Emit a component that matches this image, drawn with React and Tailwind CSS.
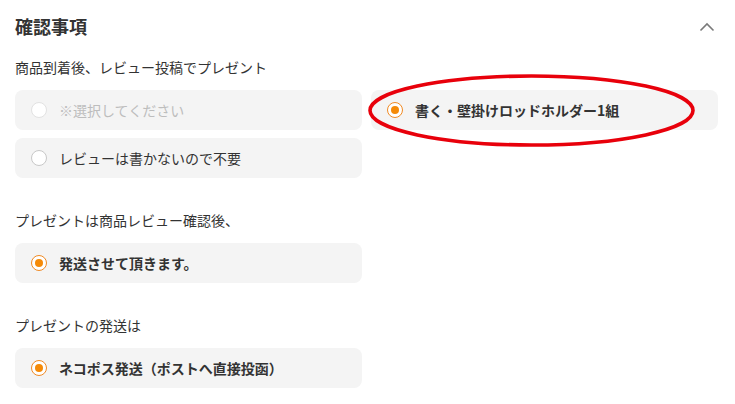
import React, { useState } from 'react';

const font = { fontFamily: '"Noto Sans CJK JP", "Noto Sans", sans-serif' };

const Radio = ({ checked, disabled }) => (
  <span
    className={`w-4 h-4 rounded-full border flex items-center justify-center shrink-0 bg-white ${
      checked ? 'border-[#f08a24]' : disabled ? 'border-[#e2e2e2]' : 'border-[#c8c8c8]'
    }`}
  >
    {checked && <span className="w-2 h-2 rounded-full bg-[#f58a07]" />}
  </span>
);

const Option = ({ label, checked, disabled, onClick }) => (
  <button
    type="button"
    onClick={onClick}
    disabled={disabled}
    className="h-[40px] w-full rounded-lg bg-[#f4f4f4] flex items-center gap-[12px] pl-[16px] text-left"
  >
    <Radio checked={checked} disabled={disabled} />
    <span
      className={`text-[14px] leading-5 ${
        disabled ? 'text-[#bdbdbd]' : checked ? 'font-bold text-[#333333]' : 'text-[#333333]'
      }`}
    >
      {label}
    </span>
  </button>
);

export default function App() {
  const [present, setPresent] = useState('rod');

  return (
    <div className="w-[735px] h-[404px] bg-white overflow-hidden" style={font}>
      <div className="pl-[15px] pr-[17px] pt-[13px]">
        {/* Header */}
        <div className="flex items-center justify-between">
          <h2 className="text-[18px] leading-[26px] font-bold text-[#333333]">確認事項</h2>
          <svg width="16" height="10" viewBox="0 0 16 10" className="mr-[3px] mt-[1px]">
            <path d="M1.5 8.5 L8 2 L14.5 8.5" fill="none" stroke="#7a7a7a" strokeWidth="1.6" />
          </svg>
        </div>

        {/* Section 1 */}
        <p className="mt-[18px] text-[14px] leading-5 text-[#333333]">商品到着後、レビュー投稿でプレゼント</p>
        <div className="relative mt-[13px] grid grid-cols-2 gap-x-[9px] gap-y-[8px]">
          <Option label="※選択してください" disabled />
          <Option
            label="書く・壁掛けロッドホルダー1組"
            checked={present === 'rod'}
            onClick={() => setPresent('rod')}
          />
          <Option
            label="レビューは書かないので不要"
            checked={present === 'none'}
            onClick={() => setPresent('none')}
          />

          {/* hand-drawn annotation */}
          <svg
            width="340"
            height="80"
            viewBox="0 0 340 80"
            className="absolute left-[352px] top-[-20px] pointer-events-none"
          >
            <ellipse cx="164.5" cy="40.5" rx="161.5" ry="34.5" fill="none" stroke="#e8000b" strokeWidth="3.6" />
          </svg>
        </div>

        {/* Section 2 */}
        <p className="mt-[32px] text-[14px] leading-5 text-[#333333]">プレゼントは商品レビュー確認後、</p>
        <div className="mt-[13px] grid grid-cols-2 gap-x-[9px]">
          <Option label="発送させて頂きます。" checked />
        </div>

        {/* Section 3 */}
        <p className="mt-[32px] text-[14px] leading-5 text-[#333333]">プレゼントの発送は</p>
        <div className="mt-[13px] grid grid-cols-2 gap-x-[9px]">
          <Option label="ネコポス発送（ポストへ直接投函）" checked />
        </div>
      </div>
    </div>
  );
}
